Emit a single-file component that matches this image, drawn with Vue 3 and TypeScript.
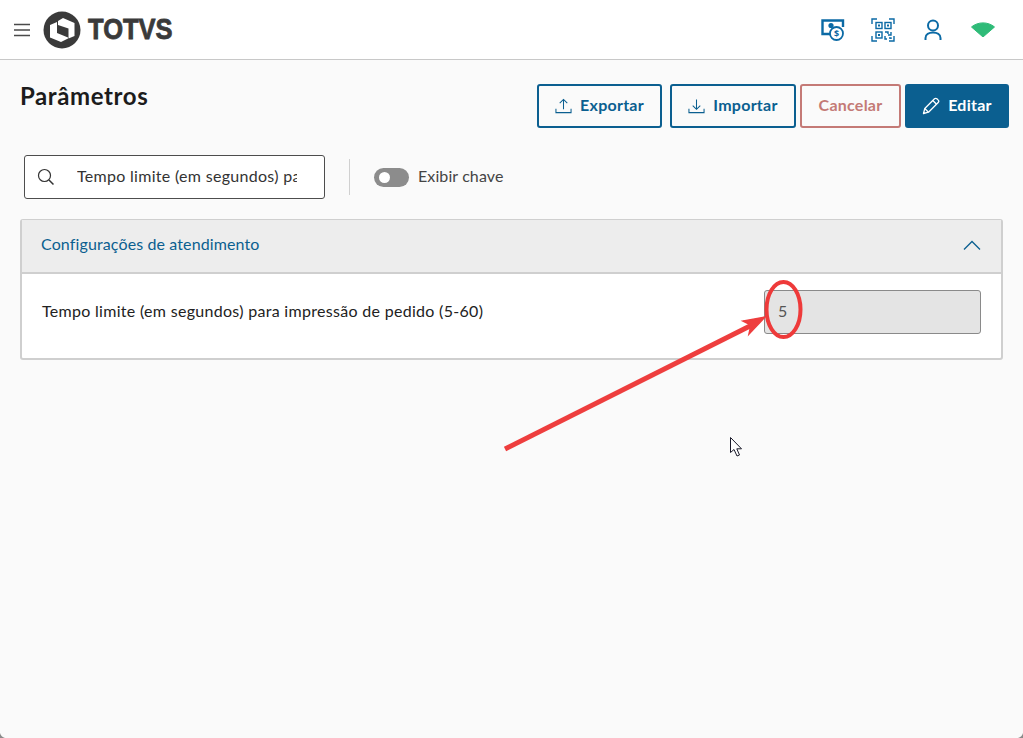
<script setup lang="ts">
const title = 'Parâmetros'
const searchValue = 'Tempo limite (em segundos) para impressão de pedido'
</script>

<template>
  <div class="page">
    <header class="topbar">
      <div class="brand">
        <svg class="menu" width="16" height="14" viewBox="0 0 16 14">
          <path d="M0 1.500H16M0 7H16M0 12.500H16" stroke="#4a4a4a" stroke-width="1.500" fill="none" />
        </svg>
        <svg class="logo" width="38" height="38" viewBox="0 0 38 38">
          <circle cx="19" cy="19" r="18.500" fill="#3a3a3a" />
          <path d="M7 14L14 11V22L25 26.500V27.500L18 31L7 26.500Z" fill="#fff" />
          <path d="M15 10L20 7L31.500 12V25L25.500 27.500V17.500L15 14Z" fill="#fff" />
        </svg>
        <span class="wordmark">TOTVS</span>
      </div>
      <div class="tools">
        <svg width="24" height="24" viewBox="0 0 24 24" fill="none" stroke="#0b6aa5" stroke-width="1.600">
          <path d="M11 16H1.500V2.500H22V9" stroke-width="2.400" />
          <circle cx="10" cy="7.500" r="2.600" fill="#0b6aa5" stroke="none" />
          <circle cx="15.500" cy="15.500" r="6.500" fill="#fff" stroke-width="1.800" />
          <text x="15.500" y="18.500" text-anchor="middle" class="dollar">$</text>
        </svg>
        <svg width="24" height="24" viewBox="0 0 24 24" fill="none" stroke="#0b6aa5" stroke-width="1.400">
          <path d="M1 6V1H6M18 1H23V6M23 18V23H18M6 23H1V18" />
          <rect x="5" y="4.500" width="6" height="6" />
          <rect x="14" y="4.500" width="6" height="6" />
          <rect x="5" y="14" width="6" height="6" />
          <path d="M7 6.500h2v2H7zM16 6.500h2v2h-2zM7 16h2v2H7z" fill="#0b6aa5" stroke="none" />
          <path d="M14 14h3v2M20 14v3h-3M14 18v3h2M18 20h2v1" />
        </svg>
        <svg width="24" height="24" viewBox="0 0 24 24" fill="none" stroke="#0b6aa5" stroke-width="2">
          <circle cx="12" cy="7.500" r="5" />
          <path d="M4.500 22V20C4.500 16.500 8 14.500 12 14.500S19.500 16.500 19.500 20V22" />
        </svg>
        <svg class="wifi" width="24" height="15" viewBox="0 0 24 15">
          <path d="M0.500 5C7 -0.500 17 -0.500 23.500 5L12 15Z" fill="#2fbb78" stroke="#2fbb78" stroke-linejoin="round" />
        </svg>
      </div>
    </header>

    <main class="content">
      <div class="heading-row">
        <h1>{{ title }}</h1>
        <div class="actions">
          <button class="btn outline export">
            <svg width="17" height="17" viewBox="0 0 18 18" fill="none" stroke="#0b5f90" stroke-width="1.100">
              <path d="M1 11.500V15.500H17V11.500M9 12V1.500M5 5.500L9 1.500L13 5.500" />
            </svg>
            <span>Exportar</span>
          </button>
          <button class="btn outline import">
            <svg width="17" height="17" viewBox="0 0 18 18" fill="none" stroke="#0b5f90" stroke-width="1.100">
              <path d="M1 11.500V15.500H17V11.500M9 1.500V12M5 8L9 12L13 8" />
            </svg>
            <span>Importar</span>
          </button>
          <button class="btn cancel"><span>Cancelar</span></button>
          <button class="btn solid">
            <svg width="18" height="18" viewBox="0 0 18 18" fill="none" stroke="#fff" stroke-width="1.300">
              <path d="M1.500 16.500L2.800 11.500L12.500 1.800C13.200 1.100 14.200 1.100 14.900 1.800L16.200 3.100C16.900 3.800 16.900 4.800 16.200 5.500L6.500 15.200Z" stroke-linejoin="round" />
              <path d="M10.800 3.500L14.500 7.200M2.800 11.500L6.500 15.200" />
            </svg>
            <span>Editar</span>
          </button>
        </div>
      </div>

      <div class="filters">
        <div class="search">
          <svg width="18" height="18" viewBox="0 0 18 18" fill="none" stroke="#333" stroke-width="1.200">
            <circle cx="7.500" cy="7.500" r="6" />
            <path d="M12 12L16.500 16.500" stroke-width="1.500" />
          </svg>
          <input class="search-text" :value="searchValue" readonly />
        </div>
        <div class="divider"></div>
        <span class="switch"><span class="knob"></span></span>
        <span class="switch-label">Exibir chave</span>
      </div>

      <section class="panel">
        <div class="panel-head">
          <span>Configurações de atendimento</span>
          <svg width="18" height="10" viewBox="0 0 18 10" fill="none" stroke="#0b5f90" stroke-width="1.300">
            <path d="M1 9.500L9 1.500L17 9.500" />
          </svg>
        </div>
        <div class="panel-body">
          <span class="row-label">Tempo limite (em segundos) para impressão de pedido (5-60)</span>
          <div class="value-box"><span>5</span></div>
        </div>
      </section>
    </main>

    <svg class="annotation" width="1023" height="738" viewBox="0 0 1023 738">
      <path d="M505 449L752 325" stroke="#ee3e3e" stroke-width="5" fill="none" />
      <path d="M765 317L743 321L751 325L749 334Z" fill="#ee3e3e" stroke="#ee3e3e" stroke-width="1.500" />
      <ellipse cx="783.500" cy="309.500" rx="17" ry="27.500" fill="none" stroke="#ee3a3a" stroke-width="4" />
      <path d="M730.500 437.500V452.500L734 449.500L737 456L739.500 455L736.800 448.800H741.500Z" fill="#fff" stroke="#1a1a2a" stroke-width="1" />
      <path d="M0 733Q1 737 5 738H0Z" fill="#8a8a8a" />
      <path d="M1023 733Q1022 737 1018 738H1023Z" fill="#8a8a8a" />
    </svg>
  </div>
</template>

<style>
html, body { margin: 0; background: #fafafa; }
</style>

<style scoped>
.page {
  position: relative;
  width: 1023px;
  height: 738px;
  overflow: hidden;
  background: #fafafa;
  font-family: Lato, "Noto Sans", sans-serif;
  letter-spacing: 0.3px;
  color: #1c1c1c;
}
.topbar {
  height: 59px;
  background: #fff;
  border-bottom: 1px solid #c8c8c8;
  display: flex;
  align-items: center;
  justify-content: space-between;
  padding: 0 28px 0 14px;
}
.brand { display: flex; align-items: center; }
.menu { margin-right: 13px; }
.logo { margin-right: 7px; }
.wordmark {
  display: inline-block;
  width: 84px;
  font-family: "Liberation Sans", sans-serif;
  font-weight: 700;
  font-size: 29px;
  letter-spacing: 0;
  color: #3a3a3a;
  -webkit-text-stroke: 0.8px #3a3a3a;
  transform: scaleX(0.88);
  transform-origin: left center;
  white-space: nowrap;
}
.tools { display: flex; align-items: center; gap: 26px; }
.dollar { font: 700 9px "Noto Sans", sans-serif; fill: #0b6aa5; stroke: none; letter-spacing: 0; }
.content { padding: 0 14px 0 20px; }
.heading-row {
  display: flex;
  justify-content: space-between;
  align-items: flex-start;
  padding-top: 24px;
}
h1 {
  margin: 0;
  font-size: 24px;
  line-height: 24px;
  font-weight: 700;
  letter-spacing: 0.6px;
  color: #1c1c1c;
}
.actions { display: flex; gap: 4px; }
.btn {
  box-sizing: border-box;
  height: 44px;
  border-radius: 3px;
  font: 700 16px Lato, "Noto Sans", sans-serif;
  letter-spacing: 0.25px;
  display: flex;
  align-items: center;
  justify-content: center;
  gap: 8px;
  background: transparent;
  padding: 0;
}
.btn span { position: relative; top: -2px; }
.outline { border: 2px solid #0b5f90; color: #0b5f90; }
.export { width: 125px; margin-right: 4px; }
.import { width: 126px; }
.cancel { width: 101px; border: 2px solid #c47a76; color: #c47a76; }
.solid { width: 104px; border: 2px solid #0b5f90; background: #0b5f90; color: #fff; }
.filters {
  display: flex;
  align-items: center;
  margin-top: 27px;
  padding-left: 4px;
  height: 44px;
}
.search {
  box-sizing: border-box;
  width: 301px;
  height: 44px;
  border: 1px solid #4d4d4d;
  border-radius: 3px;
  background: #fff;
  display: flex;
  align-items: center;
  padding-left: 12px;
}
.search-text {
  box-sizing: border-box;
  margin: 0 0 3px 22px;
  padding: 0;
  border: 0;
  outline: 0;
  background: transparent;
  width: 220px;
  font: 400 16px Lato, "Noto Sans", sans-serif;
  letter-spacing: 0.3px;
  color: #333;
}
.divider {
  width: 1px;
  height: 36px;
  background: #d0d0d0;
  margin: 0 24px;
}
.switch {
  width: 35px;
  height: 19px;
  border-radius: 10px;
  background: #8c8c8c;
  display: flex;
  align-items: center;
  padding-left: 5px;
  box-sizing: border-box;
}
.knob { width: 11px; height: 11px; border-radius: 50%; background: #fff; }
.switch-label { margin: 0 0 3px 9px; font-size: 16px; letter-spacing: 0.1px; color: #444; }
.panel {
  margin-top: 20px;
  width: 983px;
  box-sizing: border-box;
  border: 2px solid #cfcfcf;
  border-top-width: 1px;
  border-radius: 3px;
  background: #fff;
}
.panel-head {
  height: 54px;
  box-sizing: border-box;
  background: #ededed;
  border-bottom: 2px solid #cfcfcf;
  display: flex;
  align-items: center;
  justify-content: space-between;
  padding: 0 20px 2px 19px;
  color: #0b5f90;
  font-size: 16px;
  letter-spacing: 0.12px;
}
.panel-head span { margin-bottom: 3px; }
.panel-body {
  height: 84px;
  display: flex;
  justify-content: space-between;
  align-items: flex-start;
  padding: 16px 20px 0 20px;
  box-sizing: border-box;
}
.row-label { font-size: 16px; line-height: 42px; height: 44px; color: #222; }
.value-box {
  box-sizing: border-box;
  width: 217px;
  height: 44px;
  background: #e4e4e4;
  border: 1px solid #8a8a8a;
  border-radius: 3px;
  display: flex;
  align-items: center;
  padding-left: 13px;
  font-size: 16px;
  color: #555;
}
.value-box span { margin-bottom: 3px; }
.annotation { position: absolute; left: 0; top: 0; pointer-events: none; }
</style>
